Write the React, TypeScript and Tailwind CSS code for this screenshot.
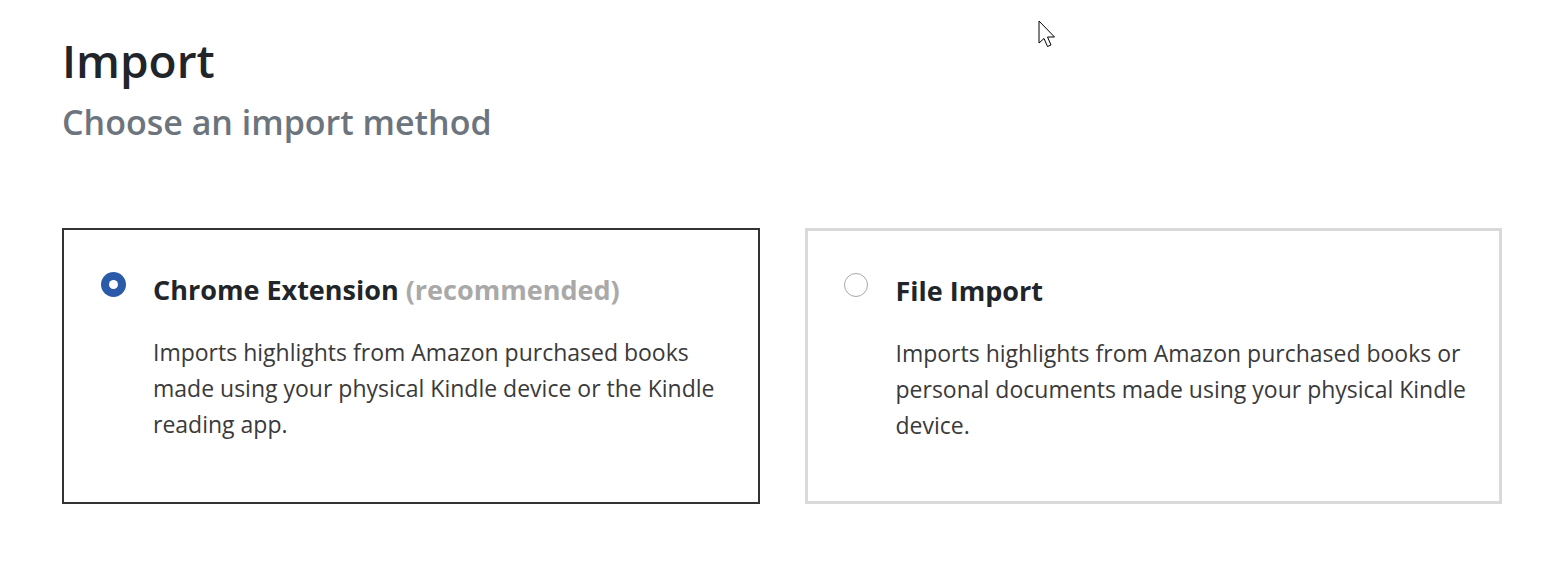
import type { ReactNode } from "react";

function Radio({ checked }: { checked: boolean }) {
  if (checked) {
    return (
      <span className="flex h-[25px] w-[25px] flex-shrink-0 items-center justify-center rounded-full bg-[#2b5ba8]">
        <span className="block h-[9px] w-[9px] rounded-full bg-white" />
      </span>
    );
  }
  return <span className="block h-[24px] w-[24px] flex-shrink-0 rounded-full border border-[#a8a8a8] bg-white" />;
}

function MethodCard({
  checked,
  title,
  note,
  children,
}: {
  checked: boolean;
  title: string;
  note?: string;
  children: ReactNode;
}) {
  return (
    <div
      className={`h-[276px] bg-white pr-[30px] pt-[42px] ${
        checked ? "border-2 border-[#333333] pl-[37px]" : "border-[3px] border-[#d9d9d9] pl-[36px]"
      }`}
    >
      <div className="flex items-start">
        <div className="w-[52px] flex-shrink-0">
          <Radio checked={checked} />
        </div>
        <div className="pt-[1px]">
          <h3 className="text-[27px] font-bold leading-[34px] text-[#212529]">
            {title}
            {note && <span className="text-[#a9a9a9]"> {note}</span>}
          </h3>
          <p className="mt-[27px] text-[23px] leading-[36px] text-[#3a3a3a]">{children}</p>
        </div>
      </div>
    </div>
  );
}

function Cursor() {
  return (
    <svg className="absolute left-[1038px] top-[20px]" width="20" height="30" viewBox="0 0 20 30">
      <path
        d="M1 1 L1 23 L6 18.5 L9.5 26.5 L13 25 L9.5 17 L16.5 17 Z"
        fill="#ffffff"
        stroke="#000000"
        strokeWidth="1"
        strokeLinejoin="round"
      />
    </svg>
  );
}

export default function App() {
  return (
    <div className="relative h-[580px] overflow-hidden bg-white font-['Open_Sans',sans-serif]">
      <Cursor />
      <div className="ml-[62px] w-[1440px] pt-[32px]">
        <h1 className="text-[46px] font-semibold leading-[56px] text-[#212529]">Import</h1>
        <p className="mt-[12px] text-[34px] font-semibold leading-[44px] text-[#6c757d]">
          Choose an import method
        </p>
        <div className="mt-[84px] grid grid-cols-2 gap-[45px]">
          <MethodCard checked title="Chrome Extension" note="(recommended)">
            Imports highlights from Amazon purchased books made using your physical Kindle device or the
            Kindle reading app.
          </MethodCard>
          <MethodCard checked={false} title="File Import">
            Imports highlights from Amazon purchased books or personal documents made using your physical
            Kindle device.
          </MethodCard>
        </div>
      </div>
    </div>
  );
}
